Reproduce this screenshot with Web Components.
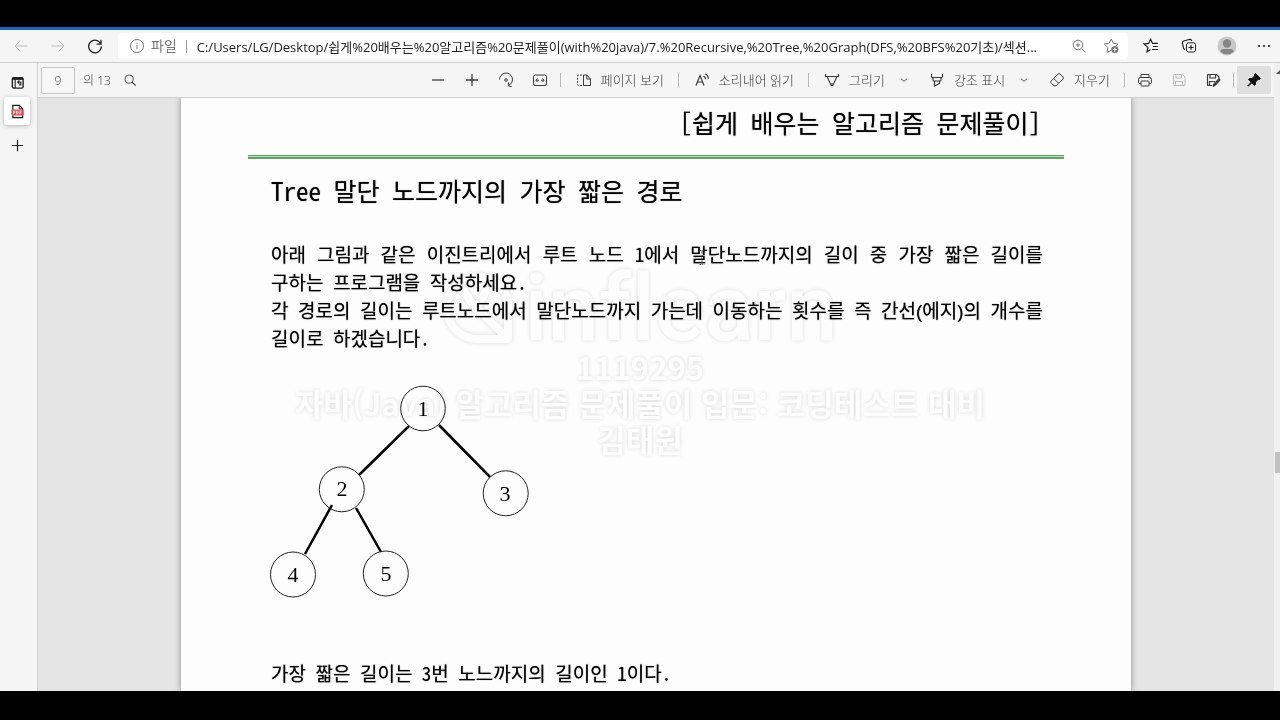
<!DOCTYPE html>
<html lang="ko">
<head>
<meta charset="utf-8">
<title>Tree 말단 노드까지의 가장 짧은 경로</title>
<style>
  html, body { margin: 0; height: 100%; background: #000; }
  body { font-family: "Open Sans", "Noto Sans CJK KR", sans-serif; color: #3b3b3b; }
</style>
</head>
<body>
<screen-frame></screen-frame>

<script>
const ICONS = {
  back: ['0 0 16 16', '<path d="M14.500 8H2M7.500 2.500 2 8l5.500 5.500"/>'],
  forward: ['0 0 16 16', '<path d="M1.500 8H14M8.500 2.500 14 8l-5.500 5.500"/>'],
  reload: ['0 0 16 16', '<path d="M13.800 6A6.300 6.300 0 1 0 14.300 8.500M14 1.800V6.200H9.600" stroke-width="1.300"/>'],
  info: ['0 0 16 16', '<circle cx="8" cy="8" r="6.500"/><path d="M8 7.200v4M8 4.600v1.200"/>'],
  zoomin: ['0 0 16 16', '<circle cx="7" cy="7" r="4.800"/><path d="M10.500 10.500l4 4M4.800 7h4.400M7 4.800v4.400"/>'],
  staradd: ['0 0 16 16', '<path d="M8.500 12.200 4 14.500l.8-5L1.300 6l4.800-.7L8.200 1l2.200 4.300 4.500.7-2 2"/><circle cx="11.800" cy="11.500" r="3.600" fill="currentColor" stroke="none"/><path d="M11.800 9.500v4M9.800 11.500h4" stroke="#fff"/>'],
  favorites: ['0 0 16 16', '<path d="M7.500 11.500 4 14l.8-4.600L1.200 6l4.400-.6L7.600 1.200 9.500 5.400h5.300M10 8.500h4.800M9 11.500h5.800" stroke-width="1.200"/>'],
  collections: ['0 0 16 16', '<rect x="5.500" y="4.800" width="9" height="9.200" rx="2"/><path d="M10 7v5M7.500 9.500h5M3.800 11.800 2.500 10 1.400 5.200Q1.200 3.600 2.700 3L8.700 1.400Q10.300 1.200 10.800 3" stroke-width="1.200"/>'],
  profile: ['0 0 20 20', '<circle cx="10" cy="10" r="9.500" fill="#c8c8c8" stroke="none"/><circle cx="10" cy="7.500" r="4.200" fill="#858585" stroke="none"/><path d="M3.200 15.500Q3.500 13 6 13h8q2.500 0 2.800 2.500A9.500 9.500 0 0 1 3.200 15.500" fill="#858585" stroke="none"/>'],
  more: ['0 0 16 16', '<g fill="currentColor" stroke="none"><circle cx="3" cy="8" r="1.100"/><circle cx="8" cy="8" r="1.100"/><circle cx="13" cy="8" r="1.100"/></g>'],
  tabs: ['0 0 16 16', '<rect x="2.500" y="3" width="11.500" height="11" rx="1.500" stroke-width="1.500"/><path d="M2.500 4h11.500" stroke-width="2.500"/><path d="M5.500 5v9M12 7.500H8.500m1.500-1.700L8.200 7.500 10 9.300M11.500 7.500v3H9.500" stroke-width="1.200"/>'],
  pdf: ['0 0 16 16', '<path d="M3 14.500V1.500h7L13.500 5v9.500z" fill="#fff" stroke="#222" stroke-width="1.300"/><path d="M9.800 1.500V5h3.700" stroke="#222"/><rect x="1.500" y="5.800" width="13" height="6.400" rx="1" fill="#e04a50" stroke="none"/><path d="M3.800 11V7.500h1.400v1.800H3.800M7 7.500h1l.8.800v1.400l-.8.800H7zM12.500 7.500h-1.800V11M10.700 9.200h1.400" stroke="#fff" stroke-width=".8"/>'],
  plus: ['0 0 16 16', '<path d="M8 2v12M2 8h12" stroke-width="1.300"/>'],
  minus: ['0 0 16 16', '<path d="M2 8h12" stroke-width="1.300"/>'],
  search: ['0 0 16 16', '<circle cx="7" cy="7" r="4.600"/><path d="M10.400 10.400 14.500 14.500" stroke-width="1.300"/>'],
  rotate: ['0 0 16 16', '<path d="M1.500 7.500A6.500 6.500 0 1 1 10.800 13.400"/><path d="M10.500 10.300 10.300 14 13.800 14.600"/><circle cx="8" cy="8" r="1.300"/>'],
  fit: ['0 0 16 16', '<rect x="1.500" y="3" width="13" height="10.500" rx="1.800"/><path d="M4 8.200h3M9 8.200h3M5.600 6.300 3.800 8.200l1.800 1.900M10.400 6.300l1.800 1.900-1.800 1.900"/>'],
  pages: ['0 0 16 16', '<path d="M7.500 3v10.500H14.500V7L10.800 3zM10.800 3v4h3.700"/><path d="M6 3H2.500q-1 0-1 1v8.500q0 1 1 1H6" stroke-dasharray="2 1.300"/>'],
  read: ['0 0 16 16', '<path d="M2 13.500 6 3.500 10 13.500M3.400 10h5.200M9.500 4q2 1 2.200 3.300M11.200 1.800q3 1.600 3.300 5" stroke-width="1.200"/>'],
  draw: ['0 0 16 16', '<path d="M1.500 2v2.500h13V2M3 4.500 7.200 13.500h1.600L13 4.500M6.500 12h3" stroke-width="1.100"/>'],
  highlight: ['0 0 16 16', '<path d="M2.500 2v2.500q0 1 1 1h9q1 0 1-1V2M4 5.500V8q0 1 1 1h6q1 0 1-1V5.500M5.500 9V14L10.500 11.500V9" stroke-width="1.200"/>'],
  erase: ['0 0 16 16', '<path d="M1.800 9.500 9 2q1-1 2 0l3 3q1 1 0 2L7 13.800H5L1.800 10.700q-.6-.6 0-1.200M4.800 6.500l4.800 4.800"/>'],
  print: ['0 0 16 16', '<path d="M4 5.500V2.500h8v3M4 11.500H2.500q-1 0-1-1V7.500q0-2 2-2h9q2 0 2 2v3q0 1-1 1H12"/><rect x="4" y="9" width="8" height="5" rx=".8"/>'],
  save: ['0 0 16 16', '<path d="M2.500 3.500q0-1 1-1h8l2.500 2.500v7.500q0 1-1 1H3.500q-1 0-1-1zM5 2.500V6h5.500V2.500M4.500 13.500V9.500h7v4"/>'],
  saveas: ['0 0 16 16', '<path d="M7 13.500H3.500q-1 0-1-1V3.500q0-1 1-1h8L14 5v2M5 2.500V6h5.500V2.500M4.500 13.500V9.500H10" stroke-width="1.200"/><path d="M8 14.500 8.600 12 13.500 7q1.200-.5 1.700 1L10.300 13.400z" fill="currentColor"/>'],
  pin: ['0 0 16 16', '<path d="M9.500 1.500 14.500 6.500 13.500 7.500H12L9.500 10v2.500L8.500 13.500 5.800 10.900 2 14.300 1.700 14 5.200 10.200 2.500 7.500 3.500 6.500H6L8.500 4V2.500z" fill="currentColor"/>'],
  caret: ['0 0 16 16', '<path d="M4.500 6.500 8 9.500l3.500-3"/>']
};

function define(name, html, setup) {
  const template = document.createElement('template');
  template.innerHTML = html;
  customElements.define(name, class extends HTMLElement {
    constructor() {
      super();
      this.attachShadow({ mode: 'open' }).append(template.content.cloneNode(true));
    }
    connectedCallback() { if (setup) setup(this, this.shadowRoot); }
  });
}

define('ui-icon', `
  <style>
    :host { display: block; width: var(--icon, 16px); height: var(--icon, 16px); flex: none; }
    svg { display: block; width: 100%; height: 100%; fill: none; stroke: currentColor; }
  </style>
  <svg aria-hidden="true"></svg>`, (host, root) => {
  const [box, shapes] = ICONS[host.getAttribute('name')];
  const svg = root.querySelector('svg');
  svg.setAttribute('viewBox', box);
  svg.innerHTML = shapes;
});

define('tool-button', `
  <style>
    :host { display: flex; flex: none; width: var(--w, 34px); height: var(--h, 28px); }
    :host([labelled]) { width: auto; }
    button { all: unset; box-sizing: border-box; flex: 1; display: flex; align-items: center; justify-content: center; gap: 9px; font-size: 13px; font-weight: 300; line-height: 20px; white-space: nowrap; }
    :host([labelled]) button { padding: 0 11px 0 12px; }
    :host([menu]) button { padding-right: 6px; }
    :host([narrow]) { width: 26px; --icon: 14px; }
    :host([dim]) { color: #bdbdbd; }
    :host([last]) button { justify-content: flex-end; padding-right: 8px; }
    :host([last]) { width: 34px; }
    :host([pressed]) button { background: #dfdfdf; color: #111; border-radius: 2px; }
  </style>
  <button type="button"><slot></slot></button>`, (host, root) => {
  const button = root.querySelector('button');
  const icon = document.createElement('ui-icon');
  icon.setAttribute('name', host.getAttribute('icon'));
  button.prepend(icon);
  if (host.hasAttribute('tip')) button.setAttribute('aria-label', host.getAttribute('tip'));
});

define('tool-divider', `
  <style>:host { display: block; flex: none; width: 1px; height: 14px; margin: 0 3px; background: #b9b9b9; }</style>`);

define('address-bar', `
  <style>
    :host { display: flex; align-items: center; height: 32px; padding-left: 2px; background: #f5f5f5; color: #222; border-bottom: 1px solid #cfcfcf; --w: 37px; }
    form { flex: 1; min-width: 0; height: 26px; margin: 0 4px 0 5px; padding: 0 9px 0 11px; display: flex; align-items: center; background: #fff; border-radius: 4px; color: #777; font-size: 14px; line-height: 20px; }
    label { margin: 0 9px 0 6px; white-space: nowrap; }
    i { width: 1px; height: 13px; background: #999; margin-right: 10px; }
    input { all: unset; flex: 1; min-width: 0; height: 26px; color: #222; font-size: 13px; text-overflow: ellipsis; white-space: nowrap; overflow: hidden; margin-right: 16px; }
    .box-icons { display: flex; gap: 16px; }
    .actions { display: flex; --w: 38px; }
    .person { --icon: 20px; }
  </style>
  <tool-button icon="back" tip="뒤로" dim></tool-button>
  <tool-button icon="forward" tip="앞으로" dim></tool-button>
  <tool-button icon="reload" tip="새로 고침"></tool-button>
  <form>
    <ui-icon name="info"></ui-icon><label for="url">파일</label><i></i>
    <input id="url" type="text" value="C:/Users/LG/Desktop/쉽게%20배우는%20알고리즘%20문제풀이(with%20java)/7.%20Recursive,%20Tree,%20Graph(DFS,%20BFS%20기초)/섹션...">
    <span class="box-icons"><ui-icon name="zoomin"></ui-icon><ui-icon name="staradd"></ui-icon></span>
  </form>
  <div class="actions">
    <tool-button icon="favorites" tip="즐겨찾기"></tool-button>
    <tool-button icon="collections" tip="컬렉션"></tool-button>
    <tool-button class="person" icon="profile" tip="프로필"></tool-button>
    <tool-button icon="more" tip="설정" last></tool-button>
  </div>`);

define('tab-rail', `
  <style>
    :host { display: flex; flex-direction: column; align-items: center; gap: 1px; flex: none; width: 38px; box-sizing: border-box; padding: 5px 3px 0 0; background: #f5f5f5; border-right: 1px solid #d2d2d2; color: #222; --w: 26px; --h: 28px; --icon: 15px; }
    .current { background: #fff; border-radius: 3px; box-shadow: 0 1px 4px #0004; }
    .new { margin-top: 5px; }
  </style>
  <tool-button icon="tabs" tip="탭 작업"></tool-button>
  <tool-button class="current" icon="pdf" tip="PDF 문서"></tool-button>
  <tool-button class="new" icon="plus" tip="새 탭"></tool-button>`);

define('pdf-toolbar', `
  <style>
    :host { display: flex; align-items: center; flex: none; height: 34px; padding: 0 3px; background: #f5f5f5; border-bottom: 1px solid #cfcfcf; }
    label { display: flex; align-items: center; gap: 8px; font-size: 12px; font-weight: 300; white-space: nowrap; }
    input { box-sizing: border-box; width: 34px; height: 27px; margin: 0; padding: 0; border: 1px solid #c4c4c4; border-radius: 2px; background: #f7f7f7; text-align: center; font: 300 12px "Open Sans", sans-serif; color: #444; }
    .find { --icon: 14px; margin-left: 2px; }
    .tools { display: flex; align-items: center; margin-left: auto; }
  </style>
  <label><input type="text" value="9" aria-label="페이지">의 13</label>
  <tool-button class="find" icon="search" tip="찾기"></tool-button>
  <div class="tools">
    <tool-button icon="minus" tip="축소"></tool-button>
    <tool-button icon="plus" tip="확대"></tool-button>
    <tool-button icon="rotate" tip="회전"></tool-button>
    <tool-button icon="fit" tip="너비에 맞춤"></tool-button>
    <tool-divider></tool-divider>
    <tool-button icon="pages" labelled>페이지 보기</tool-button>
    <tool-divider></tool-divider>
    <tool-button icon="read" labelled>소리내어 읽기</tool-button>
    <tool-divider></tool-divider>
    <tool-button icon="draw" labelled menu>그리기</tool-button>
    <tool-button icon="caret" tip="그리기 옵션" narrow></tool-button>
    <tool-button icon="highlight" labelled menu>강조 표시</tool-button>
    <tool-button icon="caret" tip="강조 옵션" narrow></tool-button>
    <tool-button icon="erase" labelled>지우기</tool-button>
    <tool-divider></tool-divider>
    <tool-button icon="print" tip="인쇄"></tool-button>
    <tool-button icon="save" tip="저장" dim></tool-button>
    <tool-button icon="saveas" tip="다른 이름으로 저장"></tool-button>
    <tool-divider></tool-divider>
    <tool-button icon="pin" tip="도구 모음 고정" pressed></tool-button>
  </div>`);

define('binary-tree', `
  <style>
    :host { display: block; }
    svg { display: block; }
    circle { fill: none; stroke: #222; }
    path { stroke: #000; stroke-width: 2.5; fill: none; }
    text { font: 400 22px "Liberation Serif", serif; text-anchor: middle; fill: #000; }
  </style>
  <svg width="260" height="214" viewBox="270 386 260 214" role="img" aria-label="이진트리">
    <path d="M409 427 359 476M439 426 490 478M332 506 305 555M356 509 381 553"/>
    <circle cx="423" cy="409.500" r="22.300"/><circle cx="341.800" cy="490.300" r="22.500"/><circle cx="505.700" cy="494.300" r="22.500"/>
    <circle cx="293" cy="575.500" r="22.500"/><circle cx="385.800" cy="574.500" r="22.500"/>
    <text x="423" y="417">1</text><text x="342" y="497">2</text><text x="505" y="502">3</text><text x="293" y="583">4</text><text x="386" y="582">5</text>
  </svg>`);

define('doc-page', `
  <style>
    :host { display: block; box-sizing: border-box; width: 950px; max-width: 100%; min-height: 100%; margin: 0 auto; padding: 7px 67px 0; background: #fdfdfd; box-shadow: 0 0 6px #0006; color: #000; font-family: "Noto Sans Mono CJK KR", "Noto Sans CJK KR", sans-serif; font-weight: 500; word-break: keep-all; }
    header, h1, p { text-shadow: 0 0 1px #000a; }
    header { padding: 0 23px; font-size: 25px; line-height: 34px; text-align: right; }
    hr { height: 1px; margin: 16px 0 0; border: solid #5fa463; border-width: 1px 0 2px; background: #b9dcba; }
    main { padding: 0 21px 0 23px; }
    h1 { margin: 14px 0 0; font-size: 25px; line-height: 34px; font-weight: 500; }
    p { margin: 0; font-size: 19px; line-height: 28px; text-align: justify; }
    .first { margin-top: 33px; }
    .paren { font-family: "Liberation Sans", sans-serif; line-height: 1; }
    binary-tree { margin: 33px 0 60px -1px; }
  </style>
  <header>[쉽게 배우는 알고리즘 문제풀이]</header>
  <hr>
  <main>
    <h1>Tree 말단 노드까지의 가장 짧은 경로</h1>
    <p class="first">아래 그림과 같은 이진트리에서 루트 노드 1에서 말단노드까지의 길이 중 가장 짧은 길이를 구하는 프로그램을 작성하세요.</p>
    <p>각 경로의 길이는 루트노드에서 말단노드까지 가는데 이동하는 횟수를 즉 간선<span class="paren">(</span>에지<span class="paren">)</span>의 개수를 길이로 하겠습니다.</p>
    <binary-tree></binary-tree>
    <p>가장 짧은 길이는 3번 노느까지의 길이인 1이다.</p>
  </main>`);

define('scroll-track', `
  <style>
    :host { display: flex; flex-direction: column; flex: none; width: 6px; background: #f0f0f0; }
    svg { display: block; flex: none; }
    .rest { flex: 379; }
    b { height: 21px; margin-left: 1px; background: #c1c1c1; }
    .below { flex: 219; }
  </style>
  <svg width="6" height="12"><path d="M2 11 6 7V11z" fill="#555"/></svg>
  <span class="rest"></span><b></b><span class="below"></span>`);

define('water-mark', `
  <style>
    :host { position: absolute; inset: 0; display: flex; flex-direction: column; align-items: center; padding-top: 243px; pointer-events: none; mix-blend-mode: multiply; color: #fff; text-shadow: 0 0 4px #00000024; text-align: center; font: 700 31px/36px "Noto Sans CJK KR", sans-serif; }
    .brand { display: flex; align-items: center; gap: 10px; height: 77px; margin-bottom: 2px; font: 500 92px/77px Roboto, sans-serif; font-variant-ligatures: none; }
    svg { display: block; filter: drop-shadow(0 0 2px #00000024); }
  </style>
  <div class="brand">
    <svg width="72" height="72" viewBox="0 0 72 72" fill="none" stroke="#fff" stroke-width="8" stroke-linecap="round" stroke-linejoin="round"><path d="M66 66H36A31 31 0 1 1 66 28V66L28 28M22 18 34 36 44 18"/></svg>
    <span>inflearn</span>
  </div>
  <div>1119295</div>
  <div>자바(Java) 알고리즘 문제풀이 입문: 코딩테스트 대비</div>
  <div>김태원</div>`);

define('screen-frame', `
  <style>
    :host { display: flex; flex-direction: column; position: relative; height: 100vh; box-sizing: border-box; border: solid #000; border-width: 27px 0 29px; overflow: hidden; }
    address-bar { border-top: 3px solid #1467c8; flex: none; }
    .work { flex: 1; display: flex; min-height: 0; }
    .viewer { flex: 1; min-width: 0; display: flex; flex-direction: column; }
    .canvas { flex: 1; min-height: 0; overflow: hidden; background: #e4e4e4; position: relative; }
    .cursor { position: absolute; left: 660px; top: 152px; }
  </style>
  <address-bar></address-bar>
  <div class="work">
    <tab-rail></tab-rail>
    <div class="viewer">
      <pdf-toolbar></pdf-toolbar>
      <div class="canvas">
        <doc-page></doc-page>
        <svg class="cursor" width="8" height="16" stroke="#555" fill="none" aria-hidden="true"><path d="M1.500 .5h2l.5 1 .5-1h2M4 1.500v12M1.500 14.500h2l.5-1 .5 1h2" stroke-dasharray="2 1"/></svg>
      </div>
    </div>
    <scroll-track></scroll-track>
  </div>
  <water-mark></water-mark>`);
</script>
</body>
</html>
